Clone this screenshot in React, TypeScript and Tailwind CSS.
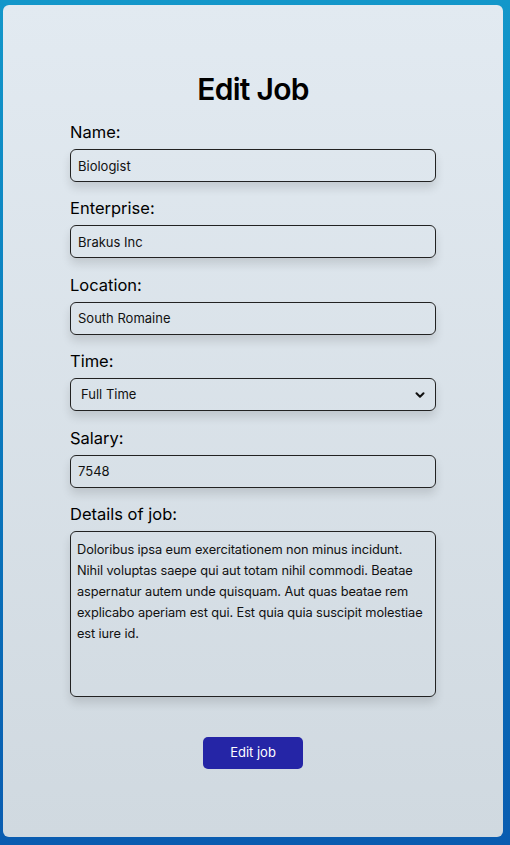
import { ChevronDown } from 'lucide-react'

const fields = [
  { label: 'Name:', value: 'Biologist' },
  { label: 'Enterprise:', value: 'Brakus Inc' },
  { label: 'Location:', value: 'South Romaine' },
]

const details =
  'Doloribus ipsa eum exercitationem non minus incidunt. Nihil voluptas saepe qui aut totam nihil commodi. Beatae aspernatur autem unde quisquam. Aut quas beatae rem explicabo aperiam est qui. Est quia quia suscipit molestiae est iure id.'

export default function App() {
  return (
    <div className="min-h-[845px] w-full bg-gradient-to-b from-[#1397ca] to-[#0a5cb0] pt-[5px] pb-[8px] pl-[3px] font-['Inter',sans-serif] text-[#111]">
      <div className="w-[500px] h-[832px] rounded-md bg-gradient-to-b from-[#e2eaf1] to-[#d0d9e0] flex flex-col items-center">
        <h1 className="mt-[66px] text-[30px] leading-9 font-semibold tracking-tight text-black">Edit Job</h1>

        <form className="w-[366px] mt-[13px] flex flex-col gap-[14.4px]">
          {fields.map((f) => (
            <div key={f.label} className="flex flex-col gap-[5px]">
              <label className="text-[16.5px] leading-6 text-black">{f.label}</label>
              <input
                defaultValue={f.value}
                className="h-[33px] rounded-md border border-[#222] bg-transparent px-[7px] text-[13px] shadow-[0_6px_10px_rgba(0,0,0,0.12)] outline-none"
              />
            </div>
          ))}

          <div className="flex flex-col gap-[5px]">
            <label className="text-[16.5px] leading-6 text-black">Time:</label>
            <div className="relative h-[33px] rounded-md border border-[#222] shadow-[0_6px_10px_rgba(0,0,0,0.12)] flex items-center pl-[10px] text-[13px]">
              <span>Full Time</span>
              <ChevronDown className="absolute right-[8px] top-[9px] size-[14px]" strokeWidth={3.5} />
            </div>
          </div>

          <div className="flex flex-col gap-[5px]">
            <label className="text-[16.5px] leading-6 text-black">Salary:</label>
            <input
              defaultValue="7548"
              className="h-[33px] rounded-md border border-[#222] bg-transparent px-[7px] text-[13px] shadow-[0_6px_10px_rgba(0,0,0,0.12)] outline-none"
            />
          </div>

          <div className="flex flex-col gap-[5px]">
            <label className="text-[16.5px] leading-6 text-black">Details of job:</label>
            <textarea
              defaultValue={details}
              className="h-[166px] resize-none rounded-md border border-[#222] bg-transparent px-[6px] py-[7px] text-[12.8px] tracking-[-0.1px] leading-[21px] shadow-[0_6px_10px_rgba(0,0,0,0.12)] outline-none"
            />
          </div>
        </form>

        <button className="mt-[40px] w-[100px] h-[32px] rounded-[5px] bg-[#2525a6] text-white text-[13px]">Edit job</button>
      </div>
    </div>
  )
}
